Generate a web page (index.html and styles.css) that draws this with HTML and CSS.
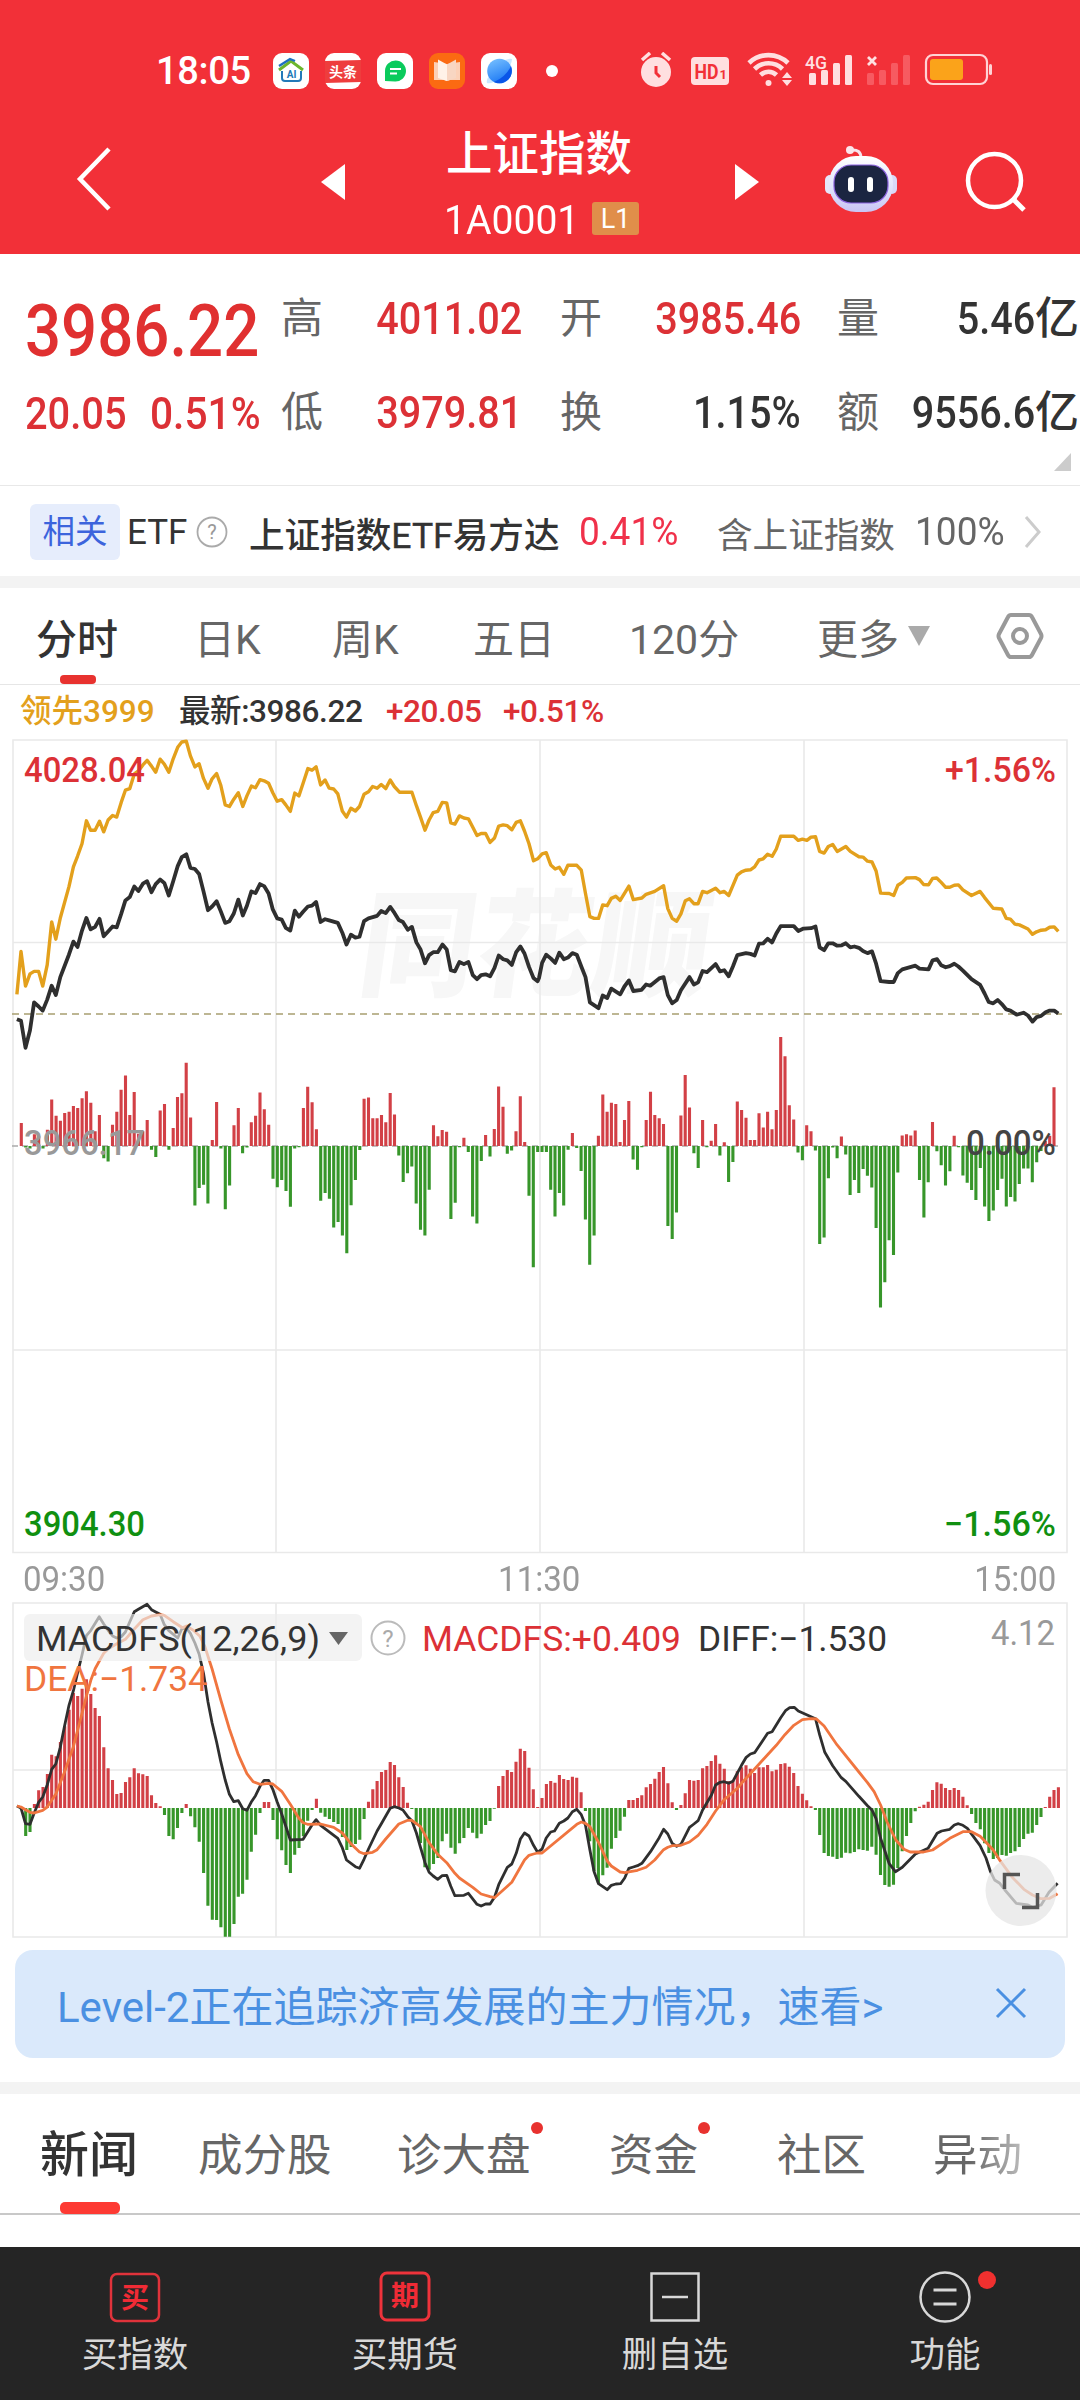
FILE: index.html
```html
<!DOCTYPE html>
<html lang="zh-CN">
<head>
<meta charset="utf-8">
<title>上证指数</title>
<link rel="stylesheet" href="styles.css">
</head>
<body>
<header class="top">
  <div class="status">
    <span class="clock">18:05</span>
    <div class="apps">
      <svg width="36" height="36" viewBox="0 0 36 36"><rect width="36" height="36" rx="9" fill="#fff"/><path d="M6 17 18 8l12 9" fill="none" stroke="#6cb52d" stroke-width="3"/><path d="M6 13 17 6l5 2" fill="none" stroke="#1e6fc0" stroke-width="2.4"/><path d="M9 18v7q0 3 3 3h13q3 0 3-3v-7" fill="none" stroke="#2379b8" stroke-width="2"/><text x="18.5" y="25" font-size="10" font-weight="700" text-anchor="middle" fill="#2379b8">AI</text></svg>
      <svg width="36" height="36" viewBox="0 0 36 36"><rect width="36" height="36" rx="9" fill="#fff"/><path d="M0 8 36 7v22l-36 1z" fill="#ee3d3d"/><text x="18" y="24" font-size="14" font-weight="700" text-anchor="middle" fill="#fff">头条</text></svg>
      <svg width="36" height="36" viewBox="0 0 36 36"><rect width="36" height="36" rx="9" fill="#fff"/><path d="M8 28V18a10.500 10.500 0 1 1 10 10.500z" fill="#0acb5c"/><path d="M13 16h11M13 20.500h7" stroke="#fff" stroke-width="2"/></svg>
      <svg width="36" height="36" viewBox="0 0 36 36"><rect width="36" height="36" rx="9" fill="#fb6a12"/><path d="M5 9l13 2 13-2v18H21l-3 1-3-1H5z" fill="#fcd0b6"/><path d="M9 6.500l9 5v16.500l-9-3z" fill="#fff2e8"/><path d="M27 6.500l-9 5v16.500l9-3z" fill="#f8d6c2"/></svg>
      <svg width="36" height="36" viewBox="0 0 36 36"><defs><linearGradient id="globe" x1="0" y1="0" x2=".4" y2="1"><stop offset="0" stop-color="#7cc4ff"/><stop offset="1" stop-color="#1f7bf5"/></linearGradient></defs><rect width="36" height="36" rx="9" fill="#fff"/><path d="M6 30q-1-3 2-7l5 6q-5 2-7 1zM24 7q5-2 7-1 0 3-2 7z" fill="#c9e6ff"/><circle cx="18.500" cy="18" r="12.300" fill="url(#globe)"/><path d="M30 13q3 9-4 14.500-6 4.500-13 1.500 12-5 17-16z" fill="#0a55e8"/></svg>
      <i class="more-dot"></i>
    </div>
    <svg class="signals" width="374" height="38" viewBox="0 0 374 38">
      <g fill="#ffdfe0">
        <circle cx="16" cy="20" r="15"/><path d="M2 8 10 1M30 8 22 1" stroke="#ffdfe0" stroke-width="3.500"/><path d="M16 14v7l4 4" fill="none" stroke="#f23038" stroke-width="3"/>
        <rect x="51" y="5" width="38" height="28" rx="4"/>
        <text x="54.500" y="26.500" font-size="20" font-weight="700" fill="#f23038" textLength="24" lengthAdjust="spacingAndGlyphs">HD</text><text x="79.500" y="26.500" font-size="13" font-weight="700" fill="#f23038">1</text>
        <g fill="none" stroke="#ffdfe0" stroke-width="4.600"><path d="M109 11a28 28 0 0 1 39 0M114.500 17a20 20 0 0 1 28 0M120.500 23a11.500 11.500 0 0 1 16 0"/></g><circle cx="128.500" cy="31" r="3"/><path d="M147 20l5 6h-10zM147 34l5-6h-10z"/>
        <text x="165" y="16.500" font-size="17.500" font-weight="500" textLength="22" lengthAdjust="spacingAndGlyphs">4G</text>
        <rect x="169" y="21" width="7" height="12" rx="1.500"/><rect x="181" y="18" width="7" height="15" rx="1.500"/><rect x="193" y="11" width="7" height="22" rx="1.500"/><rect x="205" y="3" width="7" height="30" rx="1.500"/>
        <path d="M228 5l8 8M236 5l-8 8" stroke="#ffdfe0" stroke-width="2.800"/>
      </g>
      <g fill="#f75a61"><rect x="227" y="21" width="7" height="12" rx="1.500"/><rect x="239" y="18" width="7" height="15" rx="1.500"/><rect x="251" y="11" width="7" height="22" rx="1.500"/><rect x="263" y="3" width="7" height="30" rx="1.500"/></g>
      <rect x="286" y="3" width="61" height="29" rx="7" fill="none" stroke="#ffd3d5" stroke-width="2.200"/><rect x="290" y="7" width="33" height="21" rx="3" fill="#fba31a"/><rect x="349" y="12" width="3" height="11" rx="1.500" fill="#ffd3d5"/>
    </svg>
  </div>
  <div class="titlebar">
    <svg class="back" width="36" height="66" viewBox="0 0 36 66"><path d="M34 2 5 32l29 30" fill="none" stroke="#fff" stroke-width="4.500"/></svg>
    <svg class="prev" width="24" height="36" viewBox="0 0 24 36"><path d="M24 0v36L0 18z" fill="#fff"/></svg>
    <div class="name">
      <h1>上证指数</h1>
      <div class="code"><span class="cond">1A0001</span><b>L1</b></div>
    </div>
    <svg class="next" width="24" height="36" viewBox="0 0 24 36"><path d="M0 0v36l24-18z" fill="#fff"/></svg>
    <svg class="robot" width="74" height="68" viewBox="0 0 74 68">
      <defs><linearGradient id="shell" x1="0" y1="0" x2="0" y2="1"><stop offset="0" stop-color="#fff"/><stop offset=".6" stop-color="#dfe2fb"/><stop offset="1" stop-color="#c9c4f4"/></linearGradient></defs>
      <path d="M27 5q10-1 10 8" fill="none" stroke="#f8e4ee" stroke-width="3"/><circle cx="26" cy="5" r="4" fill="#fbe6ec"/>
      <rect x="1" y="30" width="10" height="19" rx="5" fill="#e6e6fa"/><rect x="63" y="30" width="10" height="19" rx="5" fill="#d9d9f8"/>
      <rect x="5" y="11" width="64" height="56" rx="27" fill="url(#shell)"/>
      <rect x="10" y="20" width="54" height="38" rx="17" fill="#1b2541" stroke="#8c63e0" stroke-width="1.200"/>
      <rect x="24" y="32" width="6" height="15" rx="3" fill="#fff"/><rect x="43" y="32" width="6" height="15" rx="3" fill="#fff"/>
    </svg>
    <svg class="search" width="62" height="64" viewBox="0 0 62 64"><circle cx="30.500" cy="30.500" r="26.500" fill="none" stroke="#fff" stroke-width="4.500"/><path d="M49.500 49.500 60 60" stroke="#fff" stroke-width="5"/></svg>
  </div>
</header>

<section class="quote">
  <div class="price"><span class="cond">3986.22</span></div>
  <div class="k">高</div><div class="v up"><span class="cond">4011.02</span></div>
  <div class="k">开</div><div class="v up"><span class="cond">3985.46</span></div>
  <div class="k">量</div><div class="v"><span class="cond">5.46</span>亿</div>
  <div class="change"><span class="cond">20.05</span><span class="cond">0.51%</span></div>
  <div class="k">低</div><div class="v up"><span class="cond">3979.81</span></div>
  <div class="k">换</div><div class="v"><span class="cond">1.15%</span></div>
  <div class="k">额</div><div class="v"><span class="cond">9556.6</span>亿</div>
  <i class="corner"></i>
</section>

<section class="related">
  <span class="chip">相关</span>
  <span class="etf">ETF</span>
  <svg width="32" height="32" viewBox="0 0 32 32"><circle cx="16" cy="16" r="14.500" fill="none" stroke="#aaa" stroke-width="1.800"/><text x="16" y="23" font-size="20" text-anchor="middle" fill="#999">?</text></svg>
  <span class="fund">上证指数<span>ETF</span>易方达</span>
  <span class="rate"><span class="cond">0.41%</span></span>
  <span class="incl">含上证指数</span>
  <span class="hundred"><span class="cond">100%</span></span>
  <svg width="17" height="34" viewBox="0 0 17 34"><path d="M2 2 15 17 2 32" fill="none" stroke="#ccc" stroke-width="3"/></svg>
</section>

<div class="band"></div>

<nav class="periods">
  <span class="on">分时</span><span>日K</span><span>周K</span><span>五日</span><span>120分</span>
  <span class="more">更多<svg width="22" height="20" viewBox="0 0 22 20"><path d="M0 0h22L11 20z" fill="#aaa"/></svg></span>
  <svg width="50" height="48" viewBox="0 0 50 48"><path d="M16 3h18q2 0 3 2l9 17q1 2 0 4l-9 17q-1 2-3 2H16q-2 0-3-2L4 26q-1-2 0-4l9-17q1-2 3-2z" fill="none" stroke="#999" stroke-width="4"/><circle cx="25" cy="24" r="7" fill="none" stroke="#999" stroke-width="4"/></svg>
</nav>

<div class="legend"><span class="lead">领先3999</span><span>最新:3986.22</span><span class="up">+20.05</span><span class="up">+0.51%</span></div>

<svg class="chart" id="price" width="1080" height="820" viewBox="0 734 1080 820">
  <text x="358" y="987" font-size="116" font-weight="900" fill="#f7f7f7" textLength="350" transform="skewX(-8) translate(136 0)">同花顺</text>
  <path class="frame" d="M13 740H1067V1552.500H13zM13 942.500H1067M13 1350H1067M276 740V1552.500M540 740V1552.500M804 740V1552.500"/>
  <path d="M12 1146H1062" stroke="#aaa" stroke-width="1.500" stroke-dasharray="6 4"/>
  <path d="M12 1014H1062" stroke="#a89f70" stroke-width="1.500" stroke-dasharray="7 5"/>
  <g class="bars"></g>
  <g class="lines"></g>
  <g class="axis">
    <text x="24" y="782" fill="#dc3136" textLength="121" lengthAdjust="spacingAndGlyphs">4028.04</text>
    <text x="945" y="782" fill="#dc3136" textLength="111" lengthAdjust="spacingAndGlyphs">+1.56%</text>
    <text x="24" y="1155" fill="#999" textLength="121" lengthAdjust="spacingAndGlyphs">3966.17</text>
    <text x="966" y="1155" fill="#444" textLength="90" lengthAdjust="spacingAndGlyphs">0.00%</text>
    <text x="24" y="1536" fill="#109010" textLength="121" lengthAdjust="spacingAndGlyphs">3904.30</text>
    <text x="944" y="1536" fill="#109010" textLength="112" lengthAdjust="spacingAndGlyphs">−1.56%</text>
  </g>
</svg>

<div class="times"><span class="cond">09:30</span><span class="cond">11:30</span><span class="cond">15:00</span></div>

<svg class="chart" id="macd" width="1080" height="340" viewBox="0 1600 1080 340">
  <path class="frame" d="M13 1603H1067V1937H13zM13 1770H1067M276 1603V1937M540 1603V1937M804 1603V1937"/>
  <g class="bars"></g>
  <g class="lines"></g>
  <rect x="24" y="1614" width="338" height="47" rx="6" fill="#ececec" fill-opacity=".65"/>
  <g class="axis">
    <text x="36" y="1651" fill="#333" font-weight="400" textLength="284" lengthAdjust="spacingAndGlyphs">MACDFS(12,26,9)</text>
    <path d="M329 1632h19l-9.500 13z" fill="#666"/>
    <circle cx="388" cy="1638" r="16.500" fill="none" stroke="#bbb" stroke-width="2"/>
    <text class="help" x="388" y="1647" text-anchor="middle" fill="#aaa">?</text>
    <text x="422" y="1651" fill="#dc3136" font-weight="400" textLength="259" lengthAdjust="spacingAndGlyphs">MACDFS:+0.409</text>
    <text x="698" y="1651" fill="#333" font-weight="400" textLength="189" lengthAdjust="spacingAndGlyphs">DIFF:−1.530</text>
    <text x="991" y="1645" fill="#999" font-weight="400" textLength="64" lengthAdjust="spacingAndGlyphs">4.12</text>
    <text x="24" y="1691" fill="#f0753f" font-weight="400" textLength="184" lengthAdjust="spacingAndGlyphs">DEA:−1.734</text>
  </g>
  <circle cx="1021" cy="1890.500" r="35.500" fill="#e6e6e6" fill-opacity=".75"/>
  <path d="M1004.500 1889v-14.500H1020M1022 1907.500h15.500V1893" fill="none" stroke="#555" stroke-width="3.500"/>
</svg>

<section class="notice">
  <span>Level-2正在追踪济高发展的主力情况，速看&gt;</span>
  <svg width="32" height="32" viewBox="0 0 32 32"><path d="M2 2 30 30M30 2 2 30" stroke="#4a90e2" stroke-width="3"/></svg>
</section>

<div class="band"></div>

<nav class="news">
  <span class="on">新闻</span><span>成分股</span><span class="dot">诊大盘</span><span class="dot">资金</span><span>社区</span><span class="fade">异动</span>
</nav>

<footer class="actions">
  <div><svg width="54" height="54" viewBox="0 0 54 54"><rect x="3" y="4" width="48" height="47" rx="6" fill="none" stroke="#e0333b" stroke-width="2.500"/><text x="27" y="38" font-size="28" font-weight="700" text-anchor="middle" fill="#f02b35">买</text></svg>买指数</div>
  <div><svg width="54" height="54" viewBox="0 0 54 54"><rect x="3" y="3" width="48" height="47" rx="6" fill="none" stroke="#ee333b" stroke-width="3"/><text x="27" y="36" font-size="28" font-weight="700" text-anchor="middle" fill="#f02b35">期</text></svg>买期货</div>
  <div><svg width="54" height="54" viewBox="0 0 54 54"><path d="M3.500 3.500h47v47h-47zM14 27h26" fill="none" stroke="#d8d8d8" stroke-width="2.500"/></svg>删自选</div>
  <div class="dot"><svg width="54" height="54" viewBox="0 0 54 54"><circle cx="27" cy="27" r="24.500" fill="none" stroke="#d8d8d8" stroke-width="2.500"/><path d="M15.500 20h23M15.500 34h23" stroke="#d8d8d8" stroke-width="3"/></svg>功能</div>
</footer>
<script src="chart.js"></script>
</body>
</html>
```

FILE: styles.css
```css
* { box-sizing: border-box; }
body { margin: 0; width: 1080px; height: 2400px; overflow: hidden; background: #fff; color: #333; font-family: Roboto, "Noto Sans CJK SC", sans-serif; display: flex; flex-direction: column; }
body > * { flex: none; }
svg { display: block; flex: none; }
.cond { display: inline-block; transform: scaleX(.915); transform-origin: left center; }
.up { color: #dc3136; }

.top { height: 254px; background: #f23038; color: #fff; }
.status { height: 112px; padding: 30px 0 0 156px; display: flex; align-items: center; }
.clock { width: 117px; font-size: 38px; line-height: 50px; letter-spacing: -.3px; font-weight: 500; }
.apps { display: flex; align-items: center; gap: 16px; width: 367px; }
.more-dot { width: 12px; height: 12px; border-radius: 50%; background: #fff; margin-left: 13px; }
.titlebar { height: 142px; display: grid; grid-template-columns: 75px 246px 80px 334px 89px 140px 116px; }
.back { grid-column: 2; margin-top: 35px; }
.prev { margin-top: 52px; }
.name { margin-left: 45px; }
h1 { margin: 11px 0 0; font-size: 46.500px; line-height: 62px; font-weight: 500; }
.code { display: flex; align-items: center; font-size: 40.500px; line-height: 46px; margin-top: 10px; height: 46px; }
.code .cond { width: 146px; transform: scaleX(.965); margin-left: -2px; padding-top: 3px; }
.code b { margin-left: 2px; width: 47px; height: 33px; border-radius: 3px; background: #e08e4a; font-weight: 400; font-size: 27px; line-height: 34px; text-align: center; }
.next { margin-top: 52px; }
.robot { margin-top: 33px; }
.search { margin-top: 38px; }

.quote { position: relative; height: 232px; border-bottom: 1.500px solid #e8e8e8; padding: 15px 1px 0 25px; display: grid; grid-template-columns: 256px 42px 199px 38px 42px 199px 36px 42px 200px; grid-template-rows: 100px 87px; align-items: center; }
.quote > :nth-child(1), .quote > :nth-child(8) { grid-column: 1; }
.quote > :nth-child(4), .quote > :nth-child(11) { grid-column: 5; }
.quote > :nth-child(6), .quote > :nth-child(13) { grid-column: 8; }
.price { color: #e03030; font-size: 73px; font-weight: 500; padding-top: 24px; }
.price .cond { transform: scaleX(.87); }
.change { display: flex; color: #dc3136; font-size: 43.500px; font-weight: 500; padding-top: 4px; }
.change .cond { width: 125px; white-space: nowrap; }
.change .cond + .cond { transform: scaleX(.935); }
.k { font-size: 42px; color: #666; line-height: 60px; }
.v { font-size: 44px; font-weight: 500; text-align: right; white-space: nowrap; line-height: 60px; }
.v .cond { transform: scaleX(.9); transform-origin: right center; }
.corner { position: absolute; right: 9px; bottom: 14px; width: 17px; height: 18px; background: #ccc; clip-path: polygon(100% 0, 100% 100%, 0 100%); }

.related { height: 90px; padding: 2px 0 0 30px; display: grid; grid-template-columns: 97px 69px 53px 330px 138px 198px 109px auto; align-items: center; font-size: 35.600px; white-space: nowrap; }
.chip { width: 90px; height: 56px; border-radius: 6px; background: #e6edfc; color: #3c64dc; font-size: 32.500px; line-height: 56px; text-align: center; }
.etf { font-size: 35px; }
.fund { font-weight: 500; }
.fund span { font-weight: 400; -webkit-text-stroke: .4px #333; }
.rate { color: #f0314a; font-size: 39px; }
.rate .cond, .hundred .cond { transform: scaleX(.95); }
.incl, .hundred { color: #666; }
.hundred { font-size: 39px; }

.band { height: 12px; background: #f3f3f3; }

.periods { height: 97px; padding: 0 0 0 36px; border-bottom: 1.500px solid #e6e6e6; display: grid; grid-template-columns: 158px 138px 141px 156px 188px 178px auto; align-items: center; font-size: 41px; color: #666; }
.periods .on, .news .on { position: relative; color: #333; font-weight: 500; }
.periods .on::after { content: ""; position: absolute; left: 24px; bottom: -18px; width: 36px; height: 9px; border-radius: 4px; background: #e8322f; }
.more { display: flex; align-items: center; gap: 9px; }

.legend { height: 49px; display: grid; grid-template-columns: 159px 207px 117px auto; padding: 4px 0 0 20px; align-items: baseline; font-size: 31.500px; line-height: 46px; font-weight: 500; white-space: nowrap; letter-spacing: -.4px; }
.legend .lead { color: #e3a01c; letter-spacing: 0; }
.frame { fill: none; stroke: #e9e9e9; stroke-width: 1.600px; }
.axis text { font-size: 35px; font-weight: 500; }
.axis text[font-weight="400"] { font-weight: 400; }
.axis .help { font-size: 24px; font-weight: 400; }
.times { height: 46px; padding: 4px 24px 0 23px; display: flex; justify-content: space-between; align-items: center; font-size: 35.500px; color: #999; }
.times .cond { transform: scaleX(.93); }
.times .cond:nth-child(2) { transform-origin: center; }
.times .cond:nth-child(3) { transform-origin: right; }

.notice { margin: 10px 15px 24px; height: 108px; border-radius: 18px; background: #dae9fb; color: #4a90e2; font-size: 42px; display: flex; align-items: center; justify-content: space-between; padding: 0 38px 2px 42px; white-space: nowrap; }

.news { height: 121px; border-bottom: 2px solid #c8c8c8; padding: 5px 0 0 40px; display: grid; grid-template-columns: 158px 199px 212px 168px 156px auto; align-items: center; font-size: 44.500px; color: #666; white-space: nowrap; }
.news span { justify-self: start; position: relative; line-height: 64px; }
.news .on { font-size: 49px; }
.news .on::after { content: ""; position: absolute; left: 20px; bottom: -26px; width: 60px; height: 12px; border-radius: 5px; background: #fd3a33; }
.news .dot::after { content: ""; position: absolute; right: -12px; top: -2px; width: 12px; height: 12px; border-radius: 50%; background: #e8322f; }
.news .fade { color: transparent; background: linear-gradient(90deg, #666 40%, #bbb); background-clip: text; }

.actions { margin-top: 32px; height: 153px; background: #252525; color: #d8d8d8; display: grid; grid-template-columns: repeat(4, 1fr); font-size: 35.500px; }
.actions > div { position: relative; display: flex; flex-direction: column; align-items: center; padding-top: 23px; line-height: 62px; }
.actions .dot::after { content: ""; position: absolute; left: 168px; top: 24px; width: 18px; height: 18px; border-radius: 50%; background: #f0302f; }
```

FILE: chart.js
```js
// One value per slot, 241 slots from 09:30 to 15:00.
const STEP = 4.339, X0 = 17;
const priceBars = [0,56,-4,-6,29,24,-6,40,114,74,62,81,84,98,93,117,134,106,36,76,-30,-38,52,84,138,173,76,132,30,36,64,-9,-27,87,103,-9,44,120,129,204,70,-146,-103,-95,-141,15,108,-6,-155,-97,51,93,-18,-4,58,74,131,90,52,-80,-101,-83,-110,-149,-6,-3,93,145,107,41,-134,-115,-129,-200,-186,-219,-263,-145,-83,-10,116,119,68,68,76,58,130,77,-23,-88,-67,-50,-141,-205,-219,-107,51,24,39,35,-179,-139,-3,20,-15,-173,-190,-37,27,-26,42,146,96,-19,-11,36,122,10,-122,-297,-15,
-15,-15,-107,-173,-115,-146,-9,32,-5,-61,-180,-291,-219,25,126,84,106,103,10,64,110,-33,-58,-3,64,133,76,68,54,-196,-228,-163,75,174,94,-18,-54,64,-3,13,54,-23,9,-88,-39,109,88,69,15,15,80,45,84,41,88,267,220,100,65,-16,-35,51,36,-11,-240,-224,-79,-4,-30,23,-21,-120,-83,-115,-56,-73,-102,-201,-396,-334,-231,-267,-65,26,29,26,38,-83,-175,-89,59,-13,-47,-97,-62,25,-3,-72,-90,-108,-132,-54,-148,-184,-158,-108,-80,-148,-125,-136,-93,-55,-55,-89,-40,-12,12,25,144,0];
const macdBars = [0,-4,-84,-72,12,53,63,102,160,155,198,245,295,345,336,358,386,342,300,276,182,119,84,42,45,78,92,119,104,101,96,38,15,5,-21,-84,-94,-60,-15,12,-25,-58,-101,-195,-293,-335,-336,-358,-386,-386,-348,-266,-257,-215,-131,-80,-15,18,18,-36,-94,-127,-171,-195,-140,-120,-85,-38,-6,28,-14,-26,-33,-42,-48,-87,-126,-117,-108,-95,-33,19,56,81,108,114,138,129,92,63,16,-3,-50,-105,-178,-185,-168,-150,-100,-77,-119,-137,-106,-90,-60,-74,-91,-77,-51,-39,-2,66,96,114,108,139,178,171,121,56,3,
30,72,81,76,99,87,84,94,91,47,-9,-100,-190,-225,-202,-179,-122,-90,-68,-26,24,24,30,38,62,72,88,108,123,74,17,-6,9,44,84,82,84,119,126,141,158,133,118,80,82,110,122,128,118,105,122,122,129,110,115,132,134,124,105,66,43,23,5,-6,-81,-135,-144,-146,-153,-149,-134,-136,-132,-124,-126,-128,-116,-140,-201,-231,-236,-230,-180,-130,-84,-45,-10,4,10,19,54,77,73,60,54,60,54,34,8,-18,-45,-64,-106,-135,-153,-150,-141,-143,-135,-130,-117,-93,-77,-74,-51,-27,3,34,54,62];

// Series are x,y pairs; each session half has its own x origin.
const lead = ["49,672 61,567 74,652 87,622 99,616 112,616 124,652 137,600 150,495 162,537 175,485 200,409 213,360 225,334 238,303 251,247 263,270 276,270 289,248 301,274 314,245 327,234 339,238 352,202 364,172 377,168 390,132 402,125 415,110 427,99 440,113 452,128 465,96 477,108 490,128 503,95 516,67 528,54 541,52 553,88 566,115 578,107 591,143 604,167 616,144 629,131 641,160 654,208 666,212 679,194 692,178 705,212 717,186 730,162 742,166 755,146 767,149 780,155 792,178 805,199 818,195 830,208 843,224 856,179 868,186 880,155 894,119 906,123 918,115 931,159 944,147 956,167 969,169 981,181 994,223 1006,238 1019,216 1032,223 1044,212 1057,182 1070,176 1082,163 1095,167 1107,158 1120,168 1133,147 1145,163 1160,177 1196,177 1209,210 1221,238 1234,270 1246,245 1258,227 1271,224 1284,202 1297,203 1309,252 1321,255 1334,235 1347,240 1360,242 1373,263 1385,283 1397,278 1410,278 1423,300 1436,289 1448,260 1461,257 1473,259 1486,269 1499,251 1511,247 1523,272 1536,303 1549,345 1561,340",
"6,328 18,325 31,355 44,365 56,361 69,378 81,356 107,356 120,368 132,425 145,482 157,486 170,486 182,453 195,455 207,437 220,432 233,442 258,407 271,440 296,436 308,427 333,420 359,406 371,462 384,486 397,493 409,475 422,443 434,438 447,450 459,450 472,420 485,423 510,412 523,423 535,420 548,430 573,380 585,372 598,368 611,367 623,360 636,343 648,340 661,329 674,334 686,316 699,285 737,285 750,295 762,292 775,295 787,287 800,286 812,322 825,326 837,310 850,305 863,322 888,310 901,322 926,335 938,336 951,346 964,348 976,370 989,424 1014,425 1027,430 1039,405 1052,398 1064,387 1090,386 1102,391 1114,403 1128,404 1140,388 1152,387 1165,398 1178,410 1190,410 1203,405 1215,404 1228,416 1253,430 1278,420 1291,435 1316,461 1341,463 1354,486 1366,488 1379,500 1392,502 1417,512 1430,525 1442,519 1455,515 1468,514 1480,508 1493,507 1505,518"];
const last = ["49,733 61,737 74,803 87,760 99,692 112,702 124,712 137,685 150,651 162,674 175,630 200,575 213,543 225,556 238,516 251,485 263,513 276,507 289,487 301,530 314,518 327,506 339,508 352,475 364,442 377,434 390,408 402,419 415,401 427,395 440,422 452,402 465,391 477,399 490,430 503,395 516,358 528,336 541,329 553,362 566,365 578,377 591,420 604,466 616,457 629,444 641,469 654,497 666,493 679,474 692,440 705,479 717,455 730,420 742,424 755,402 767,407 780,425 792,464 805,486 818,489 830,509 843,516 856,467 868,482 880,470 894,457 906,455 918,446 931,495 944,488 956,491 981,497 994,521 1006,550 1019,526 1032,533 1044,531 1057,493 1070,486 1095,480 1107,468 1120,473 1133,458 1145,472 1158,490 1170,495 1184,514 1196,507 1209,545 1221,562 1234,596 1246,576 1258,569 1271,569 1285,550 1297,562 1309,613 1321,616 1334,593 1347,598 1360,593 1373,625 1385,635 1397,625 1410,623 1423,628 1436,607 1448,577 1461,586 1473,589 1486,600 1499,569 1511,555 1523,572 1536,605 1549,632 1561,640",
"-3,632 6,595 18,575 31,584 44,595 56,570 69,586 81,582 94,571 107,575 120,604 132,630 145,692 170,706 182,675 195,681 207,658 233,672 245,653 258,638 271,664 295,661 308,648 320,651 346,633 359,630 371,674 384,694 397,686 409,662 434,630 447,648 459,643 472,615 485,618 510,598 523,616 535,613 548,628 560,604 573,576 598,571 611,573 623,577 636,548 648,547 661,536 674,545 686,523 699,505 737,505 750,517 765,511 787,510 800,506 812,557 825,564 837,547 850,547 863,553 876,552 888,547 901,557 913,555 926,558 938,566 951,571 964,567 976,597 989,640 1014,642 1027,642 1039,620 1052,611 1090,602 1102,609 1128,611 1140,589 1153,586 1165,601 1178,606 1190,603 1203,597 1215,604 1228,614 1253,635 1278,649 1291,670 1303,691 1316,694 1329,686 1341,696 1354,709 1366,712 1384,722 1404,717 1417,724 1430,739 1442,728 1455,725 1468,716 1480,712 1493,712 1505,719"];
const diff = ["49,978 61,984 74,1031 87,1033 99,1000 112,967 124,951 137,915 150,868 162,852 175,802 187,740 200,677 213,632 225,580 238,525 251,467 264,451 288,410 301,432 314,451 327,468 339,474 352,470 364,456 377,425 390,395 402,388 427,373 440,389 452,396 465,403 477,434 490,452 516,474 528,447 541,444 553,460 566,489 578,522 591,580 604,666 616,729 629,786 641,845 654,900 666,943 679,965 692,962 705,986 717,991 729,967 742,947 755,919 767,901 780,901 792,928 805,966 818,1002 830,1039 843,1080 880,1078 893,1057 906,1035 918,1019 931,1036 981,1075 994,1103 1006,1140 1032,1160 1044,1165 1057,1138 1070,1107 1095,1053 1107,1032 1133,985 1145,980 1158,984 1170,990 1184,1010 1196,1022 1209,1059 1221,1102 1234,1148 1246,1177 1258,1188 1271,1198 1284,1187 1297,1186 1309,1219 1321,1247 1347,1246 1360,1240 1385,1273 1397,1278 1410,1272 1423,1272 1436,1252 1448,1214 1473,1162 1486,1152 1499,1120 1511,1077 1523,1059 1536,1068 1549,1096 1561,1117",
"6,1107 18,1074 31,1056 42,1053 56,1030 69,1023 81,1014 94,995 107,988 120,1004 132,1036 145,1110 157,1175 170,1211 195,1229 207,1216 220,1212 234,1211 246,1194 258,1165 271,1161 283,1157 296,1150 321,1115 346,1073 359,1048 371,1062 384,1090 397,1099 409,1093 434,1042 447,1032 459,1022 472,990 498,945 510,915 523,907 535,905 548,910 560,904 585,856 598,833 611,822 623,818 661,760 674,755 699,713 713,692 725,683 738,682 750,693 800,716 812,764 827,817 850,857 875,893 888,904 926,949 951,977 964,990 976,1016 989,1075 1014,1151 1032,1175 1052,1162 1090,1122 1127,1105 1153,1060 1166,1053 1190,1048 1203,1035 1215,1031 1228,1036 1241,1045 1278,1097 1295,1134 1308,1175 1320,1200 1335,1210 1350,1230 1383,1270 1417,1275 1430,1282 1455,1275 1478,1237 1503,1210"];
const dea = ["49,978 61,981 74,989 87,997 99,999 124,991 137,981 162,942 187,877 213,800 238,700 251,648 264,600 276,566 290,540 301,520 314,507 339,491 364,478 390,447 415,419 440,408 465,404 477,406 503,425 530,443 541,438 560,450 580,468 595,500 616,567 641,660 666,747 692,824 717,881 735,905 755,913 780,910 792,912 818,934 843,973 868,1015 880,1028 893,1033 931,1032 969,1042 994,1059 1019,1091 1044,1116 1057,1121 1082,1117 1095,1109 1120,1077 1158,1032 1184,1021 1196,1021 1221,1040 1246,1088 1271,1123 1297,1148 1321,1180 1334,1194 1373,1222 1397,1242 1423,1250 1436,1253 1461,1230 1486,1207 1523,1140 1536,1126 1549,1122 1561,1119",
"6,1119 107,1033 120,1026 132,1030 145,1040 170,1087 195,1143 207,1158 233,1176 246,1178 283,1171 308,1162 333,1140 359,1109 371,1102 384,1097 409,1096 434,1086 459,1066 485,1033 510,993 535,959 573,925 585,910 623,867 661,824 686,796 711,764 737,736 762,719 787,716 803,717 825,738 862,794 926,876 951,908 970,935 989,975 1008,1026 1033,1080 1057,1108 1075,1116 1114,1116 1140,1110 1190,1075 1228,1055 1253,1055 1278,1069 1295,1087 1316,1110 1336,1142 1370,1190 1405,1228 1430,1245 1455,1256 1480,1255 1503,1241"];

const NS = "http://www.w3.org/2000/svg";
function add(parent, d, attrs) {
  const p = document.createElementNS(NS, "path");
  p.setAttribute("d", d);
  for (const k in attrs) p.setAttribute(k, attrs[k]);
  parent.appendChild(p);
}
function drawBars(host, values, base, unit) {
  let up = "", down = "";
  values.forEach((v, i) => {
    const seg = `M${(X0 + i * STEP).toFixed(1)} ${base}v${(-v / unit).toFixed(1)}`;
    if (v > 0) up += seg; else if (v < 0) down += seg;
  });
  add(host, up, { stroke: "#d24046", "stroke-width": 3.1 });
  add(host, down, { stroke: "#37962a", "stroke-width": 3.1 });
}
function drawLine(host, halves, top, unit, color, width) {
  const pts = halves.flatMap((s, h) => s.split(" ").map(p => {
    const [x, y] = p.split(",").map(Number);
    return (h * 540 + x / 2.9037).toFixed(1) + " " + (top + y / unit).toFixed(1);
  }));
  add(host, "M" + pts.join("L"), { fill: "none", stroke: color, "stroke-width": width, "stroke-linejoin": "round" });
}
const price = document.getElementById("price"), macd = document.getElementById("macd");
drawBars(price.querySelector(".bars"), priceBars, 1146, 2.45);
drawLine(price.querySelector(".lines"), lead, 720, 2.45, "#e3a01c", 3.4);
drawLine(price.querySelector(".lines"), last, 720, 2.45, "#2f2f2f", 3.8);
drawBars(macd.querySelector(".bars"), macdBars, 1808, 3);
drawLine(macd.querySelector(".lines"), diff, 1480, 3, "#2f2f2f", 2.8);
drawLine(macd.querySelector(".lines"), dea, 1480, 3, "#f0753f", 2.8);
```
